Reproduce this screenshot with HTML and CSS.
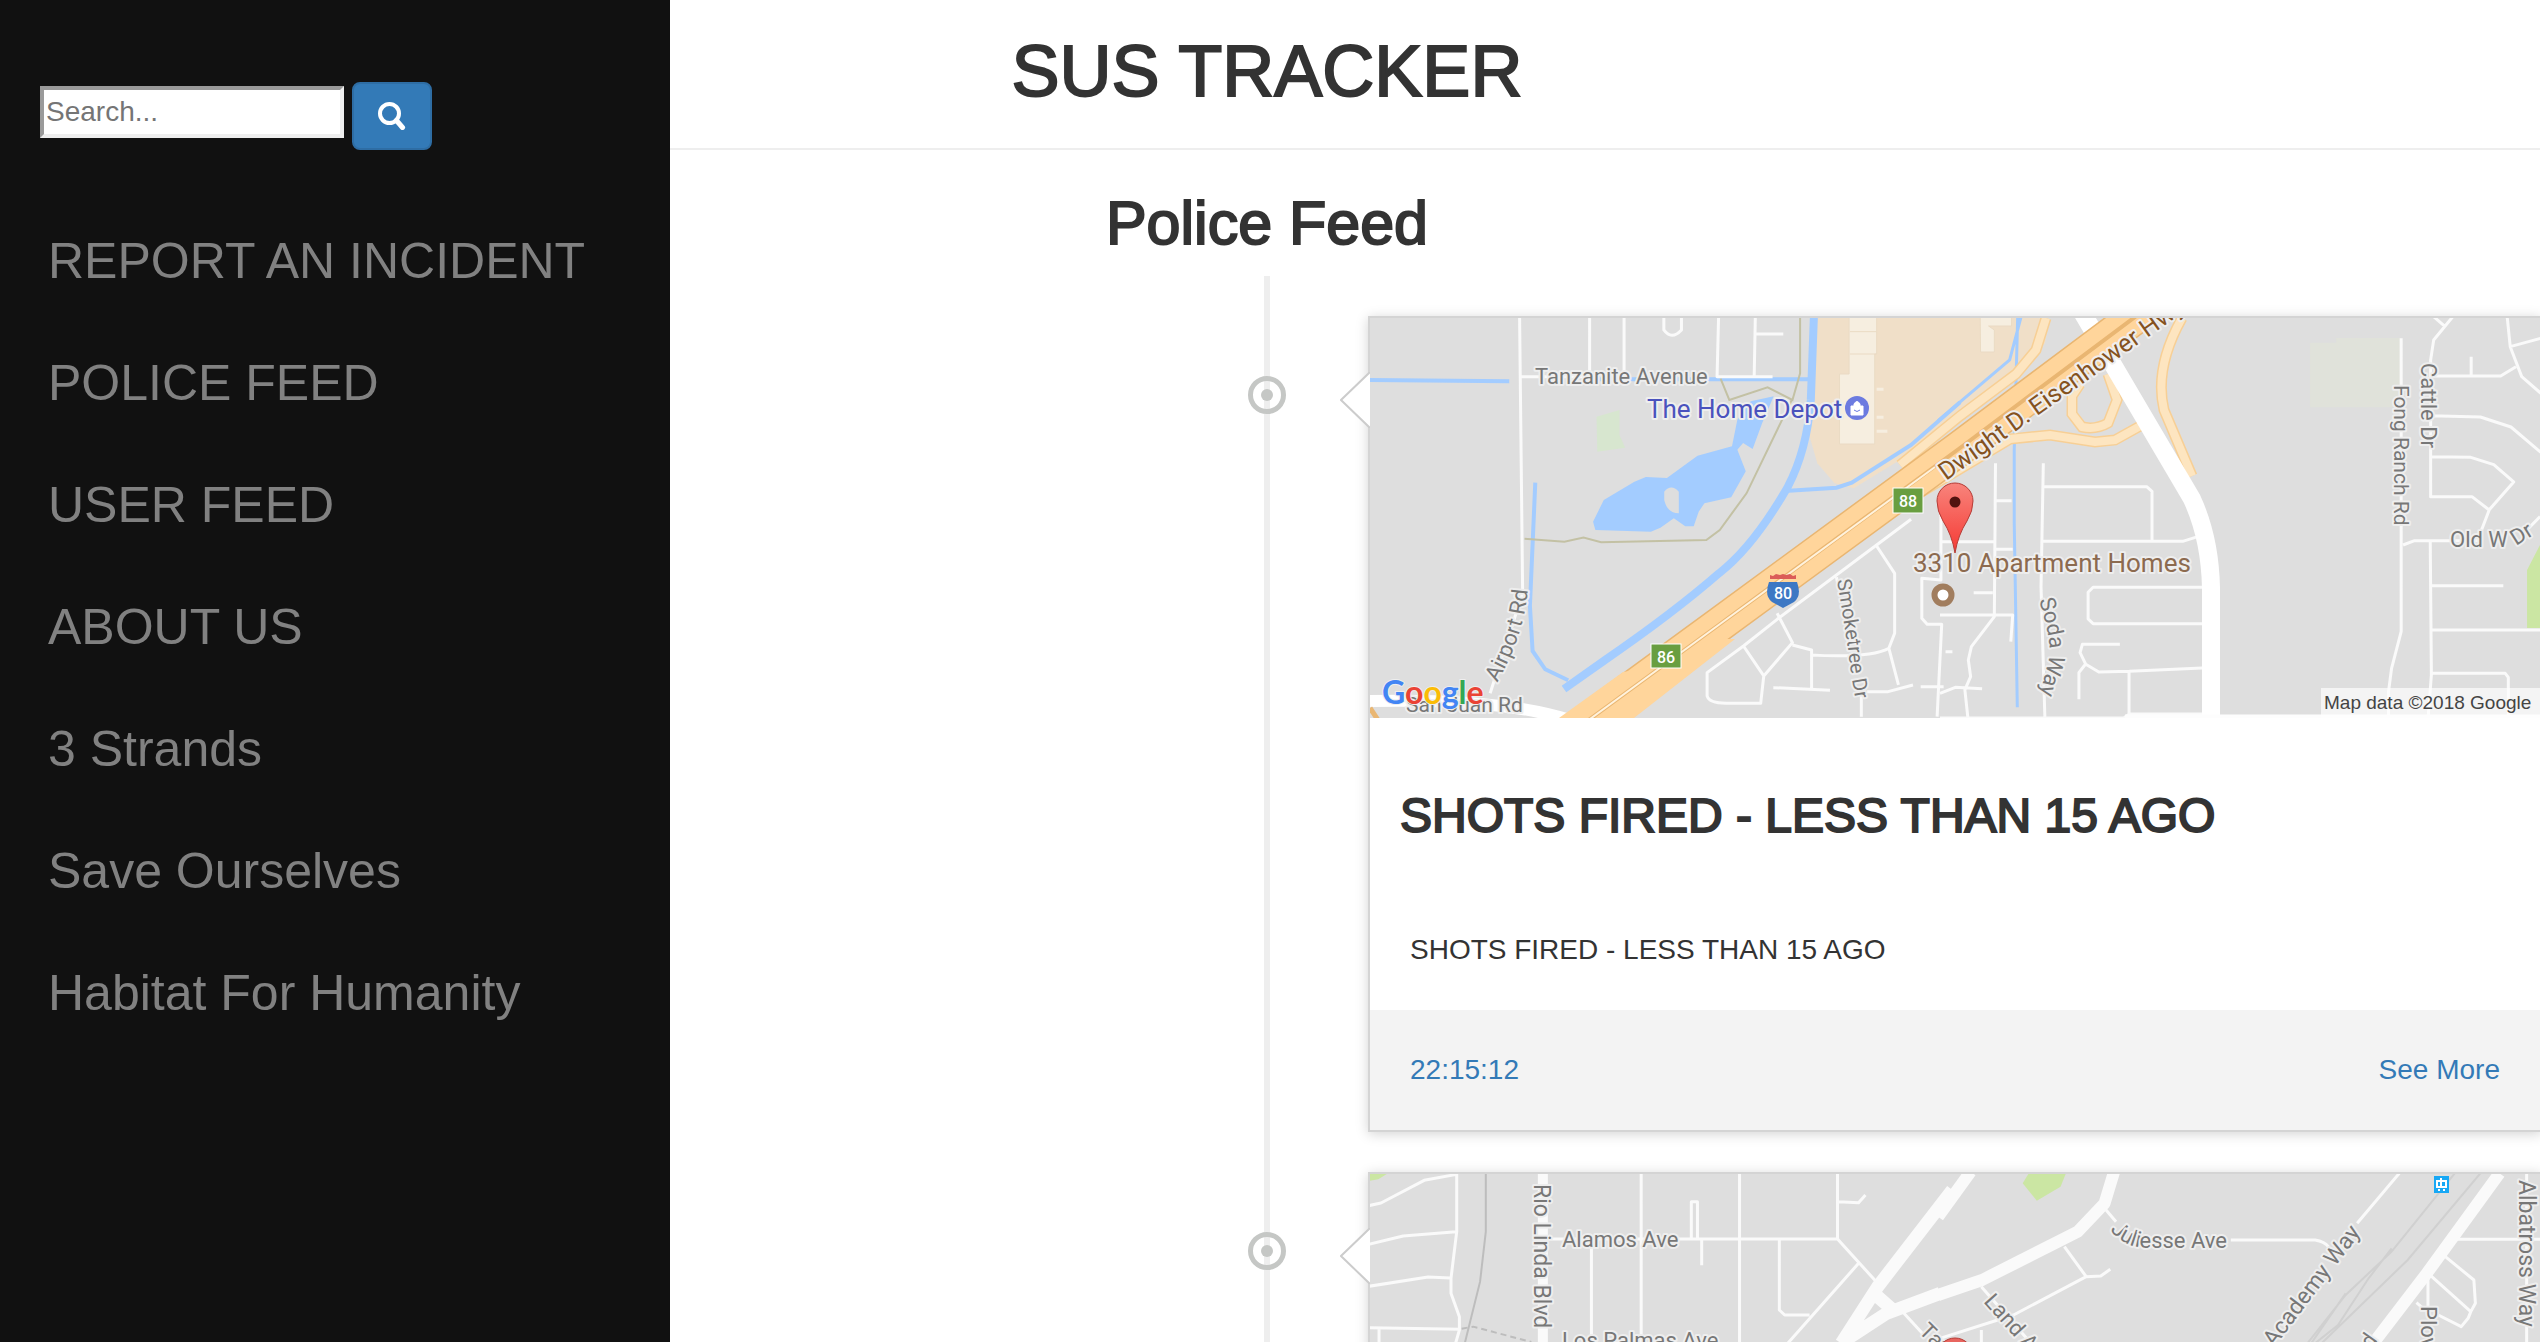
FILE: index.html
```html
<!DOCTYPE html>
<html lang="en">
<head>
<meta charset="utf-8">
<title>SUS Tracker</title>
<link rel="stylesheet" href="styles.css">
</head>
<body>
<div class="page">
  <aside class="sidebar">
    <form class="search">
      <input class="search-input" type="text" placeholder="Search..." aria-label="Search">
      <button class="search-button" type="button" aria-label="Search">
        <svg class="search-icon" viewBox="0 0 28 28" aria-hidden="true"><circle cx="11.500" cy="11.500" r="9.500" fill="none" stroke="#fff" stroke-width="4"/><path d="M18.500 18.500l6 7" stroke="#fff" stroke-width="5" stroke-linecap="round"/></svg>
      </button>
    </form>
    <nav class="menu">
      <a href="#report">REPORT AN INCIDENT</a>
      <a href="#police">POLICE FEED</a>
      <a href="#user">USER FEED</a>
      <a href="#about">ABOUT US</a>
      <a href="#strands">3 Strands</a>
      <a href="#save">Save Ourselves</a>
      <a href="#habitat">Habitat For Humanity</a>
    </nav>
  </aside>
  <main class="main">
    <h1 class="site-title">SUS TRACKER</h1>
    <hr class="rule">
    <h2 class="feed-title">Police Feed</h2>
    <ul class="timeline">
      <li class="entry">
        <svg class="badge" viewBox="0 0 38 38" aria-hidden="true"><circle cx="19" cy="19" r="16.500"/><circle class="dot" cx="19" cy="19" r="6"/></svg>
        <article class="card">
          <svg class="arrow" viewBox="0 0 30 56" aria-hidden="true"><path d="M30 0L1 28l29 28"/></svg>
          <svg class="map" viewBox="0 0 1170 400" role="img" aria-label="Map of the incident">
            <defs>
              <linearGradient id="pin" x1="0" y1="0" x2="0" y2="1"><stop offset="0" stop-color="#f8847c"/><stop offset="1" stop-color="#f53a34"/></linearGradient>
            </defs>
            <!-- land, parks and water -->
            <g class="shapes" transform="translate(-10 -18) scale(.3827 .3333)">
              <path fill="#f0dfc8" d="M1195 50H1800L1790 130 1568 340 1440 460 1290 565 1240 550 1195 490 1175 410z"/>
              <path fill="#f6eee0" stroke="#eadbc4" d="M1278 50h72v112h-5v270h-92V222h25z"/>
              <path stroke="#eadbc4" d="M1280 95h70M1280 162h70" fill="none"/>
              <path stroke="#f6eee0" stroke-width="3" d="M1350 268h18M1350 352h18M1350 394h28" fill="none"/>
              <path fill="#d7e6cf" d="M618 350l60-20v75l15 38-73 12z"/>
              <path fill="#a3ccff" d="M615 690l-6-25 28-65 80-55 30-14 55 3 80-67 90-28 14-80 35-55 60-15-30 80-25 78-25-18-15 20 22 65-38 78-70 18-15 25-13 44h-22l-30-24-35 28-25 12z"/>
              <path fill="#dedede" d="M795 575q18-25 38 0v65q-30 0-38-40z"/>
              <path fill="none" stroke="#a3ccff" stroke-width="4" d="M25 240l365 4M600 238h572M458 548l-14 370 7 135 33 55 60 33M1110 573l135-10 40-15 155-113 128-128"/>
              <path fill="none" stroke="#a3ccff" stroke-width="8" d="M1186 50l-8 250q-10 150-60 260-90 180-180 260-120 120-300 262l-105 85"/>
              <path fill="none" stroke="#c3c1a4" stroke-width="2" d="M1150 50v170l-20 80-65-38-100 38-23-65M1128 300l-118 280-70 110-35 30-275 7-46-14-50 12-104-9"/>
            </g>
            <g class="shapes" transform="translate(570 -18) scale(.3827 .3333)">
              <path fill="#f6eee0" stroke="#eadbc4" d="M105 50h82v28h-60l15 12v66h-36z"/>
              <path fill="#e0e2da" d="M967 128h68v-14h170v208H967z"/>
              <path fill="#cbe6a3" d="M1568 735l-34 75v174h34z"/>
              <path fill="none" stroke="#a3ccff" stroke-width="3" d="M212 50l-30 130L-5 362M203 50l-9 400v220l8 552"/>
            </g>
            <!-- side streets -->
            <g class="streets" transform="translate(-10 -18) scale(.3827 .3333)">
              <path d="M417 50l8 830-85 300M420 230h180M600 50v180M690 50v180M794 50v40q20 32 46 0V50M937 50l-4 180h145M1033 50l-3 180M1034 102h72M1440 658l-350 300-88 80-95 80v70q5 22 50 22h90l8-82 75-100-40-88M1002 1038l53 90M1350 738l47 82v180l-15 45q-50 30-205 20M1382 1045l25 110M1130 1035l50 15v118M1080 1163l148 8M1325 1175h55l65-20M1310 1175v75M1465 1160h60M1245 832l5 30M1518 640v200l-50-5v120l14 18h38l-12 277M1530 1055h18"/>
            </g>
            <g class="streets" transform="translate(570 -18) scale(.3827 .3333)">
              <path d="M145 490l-3 460-60 90-8 40 6 50-15 40 8 85M145 602h42M145 748h45M0 725h145M0 945h190l-5 80M88 878h50M0 1180l40-18 70 4M270 490l-6 370 10 390M270 560h270l14 14v145M264 724h370l50-18M685 862H400l-13 15v80l13 14h285M470 1033h-98l-6 25 15 35 34 23 80-2 190-10M494 1116v134M380 1093l-17 25v80M1205 115v880l-25 110-8 70v70M1340 50l-50 70-8 60v410h108l45 40-20 60M1290 50l30 30M1290 228h175l40-28M1388 170v55M1482 50l8 90 30 90 50 50M1490 140l80-25M1282 347l130 4 80 30 78 76M1282 470l105 2 60 22 52 52-65 85M1210 735l30-13h170M1568 650l-30 35M1281 725l3 400-8 120M1284 857h188M1284 990h285M1282 1120h195l8 12v115M0 1254h480l15-12h190"/>
            </g>
            <!-- ramps, arterials and the highway -->
            <g class="ramps">
              <path d="M548 176L640 121 680 117 725 124 745 122 772 107M676 0L666 32 646 56 590 98 530 147M738 56L747 82 738 105Q726 112 712 109L702 96V78L710 66M812 0Q784 50 794 92L822 158"/>
              <path class="fill" d="M548 176L640 121 680 117 725 124 745 122 772 107M676 0L666 32 646 56 590 98 530 147M738 56L747 82 738 105Q726 112 712 109L702 96V78L710 66M812 0Q784 50 794 92L822 158"/>
            </g>
            <g fill="none">
              <path stroke="#fff" stroke-width="12" d="M0 383Q130 380 200 402M-4 398h4"/>
              <path stroke="#fff" stroke-width="18" d="M712 -6L822 181Q840 220 841 270V402"/>
              <path stroke="#e9b672" stroke-width="36" d="M205 412L350 306 590 130 785 -16"/>
              <path stroke="#ffd59b" stroke-width="33" d="M205 412L350 306 590 130 785 -16"/>
              <path fill="#ffd59b" d="M189 400l64-46 18-3 70-30 24 0-101 79z"/>
              <path stroke="#e9b672" stroke-width="4" d="M205 412L350 306 590 130 785 -16"/>
              <path stroke="#fff2dc" stroke-width="2" d="M220 401L350 306 565 149"/>
              <path stroke="#e9b672" stroke-width="5" d="M0 390l8 12"/>
              <path stroke="#fdfdfd" stroke-width="7" d="M755 400h415"/>
            </g>
            <!-- labels -->
            <g class="labels">
              <text x="165" y="66" font-size="22">Tanzanite Avenue</text>
              <text x="277" y="100" font-size="26" fill="#4a52bd">The Home Depot</text>
              <text x="36" y="394" font-size="21">San Juan Rd</text>
              <path id="airport" fill="none" d="M127 365Q158 310 158 262"/>
              <text font-size="22"><textPath href="#airport">Airport Rd</textPath></text>
              <path id="smoke" fill="none" d="M467 262L478 330Q480 355 489 400"/>
              <text font-size="20"><textPath href="#smoke">Smoketree Dr</textPath></text>
              <path id="soda" fill="none" d="M669 282Q684 330 678 345L664 398"/>
              <text font-size="22"><textPath href="#soda">Soda Way</textPath></text>
              <path id="dwight" fill="none" d="M576 163L850 -32"/>
              <text font-size="25" fill="#85521e"><textPath href="#dwight">Dwight D. Eisenhower Hwy</textPath></text>
              <text font-size="21" transform="translate(1024 67) rotate(90)">Fong Ranch Rd</text>
              <text font-size="22" transform="translate(1051 45) rotate(90)">Cattle Dr</text>
              <text x="1080" y="229" font-size="22">Old W</text>
              <text font-size="22" transform="translate(1146 228) rotate(-32)">Dr</text>
            </g>
            <circle cx="487" cy="90" r="12" fill="#6c7be0"/>
            <path d="M481 88h12v9h-12zM484 88v-2q3-5 6 0v2" fill="#fff" stroke="#fff"/><path d="M484 92q3 3 6 0" fill="none" stroke="#6c7be0"/>
            <g class="signs">
              <rect x="523" y="170" width="30" height="25"/><text x="538" y="189">88</text>
              <rect x="281" y="326" width="30" height="24"/><text x="296" y="345">86</text>
              <path d="M399 264h28q5 14-3 20l-11 6-11-6q-8-6-3-20z" fill="#3d78c4" stroke="none"/>
              <path d="M400 261v-4l3 1 3-2 4 1 3-1 3 1 4-1 3 2 3-1v4z" fill="#db5c58" stroke="none"/>
              <text x="413" y="281">80</text>
            </g>
            <text class="place" x="543" y="254" font-size="26">3310 Apartment Homes</text>
            <path d="M585 235Q582 217 573 203Q567 193 567 183A18 18 0 0 1 603 183Q603 193 597 203Q588 217 585 235z" fill="url(#pin)" stroke="#b53d37" stroke-width="1"/>
            <circle cx="585" cy="184" r="5.500" fill="#52130f"/>
            <circle cx="573" cy="277" r="8.500" fill="#fff" stroke="#a17d5e" stroke-width="6"/>
            <text class="google" x="12" y="386"><tspan fill="#4285f4">G</tspan><tspan fill="#ea4335">o</tspan><tspan fill="#fbbc05">o</tspan><tspan fill="#4285f4">g</tspan><tspan fill="#34a853">l</tspan><tspan fill="#ea4335">e</tspan></text>
            <rect x="951" y="370" width="219" height="30" fill="#fff" opacity=".65"/>
            <text class="credit" x="954" y="391">Map data ©2018 Google</text>
          </svg>
          <h2 class="card-title">SHOTS FIRED - LESS THAN 15 AGO</h2>
          <p class="card-text">SHOTS FIRED - LESS THAN 15 AGO</p>
          <footer class="card-footer"><a href="#time">22:15:12</a><a href="#more">See More</a></footer>
        </article>
      </li>
      <li class="entry">
        <svg class="badge" viewBox="0 0 38 38" aria-hidden="true"><circle cx="19" cy="19" r="16.500"/><circle class="dot" cx="19" cy="19" r="6"/></svg>
        <article class="card">
          <svg class="arrow" viewBox="0 0 30 56" aria-hidden="true"><path d="M30 0L1 28l29 28"/></svg>
          <svg class="map" viewBox="0 0 1170 400" role="img" aria-label="Map of the incident">
            <g class="shapes" transform="translate(-30 -24) scale(.3827 .3333)">
              <path fill="#cbe6a3" d="M78 70h47l-25 18-22 4z"/>
              <path fill="none" stroke="#bdbdbd" stroke-width="2" d="M381 70v175l-15 150-40 185"/>
              <path fill="none" stroke="#bdbdbd" stroke-width="2" stroke-dasharray="6 4" d="M318 536l30-6 152 46"/>
            </g>
            <g class="shapes" transform="translate(570 -24) scale(.3827 .3333)">
              <path fill="#cbe6a3" d="M232 70h97l-14 40-62 42-37-52z"/>
              <path fill="none" stroke="#d0d0d0" stroke-width="2" d="M1345 70l-165 235-120 130-100 145M1412 70l-190 260-225 250M1180 295l-60 90-80 140-60 55M1060 430l-90 150"/>
            </g>
            <g class="streets" transform="translate(-30 -24) scale(.3827 .3333)">
              <path d="M75 167l32-8 113-68 85-18v172l-15 140v45l22 70v40l-10 40M75 283l90-25 138-13M75 409l155-28 58 3M75 533l240 5M102 535v45M550 267h750M787 70v510M657 270v310M1044 70v510M1300 70v197l105 133M1303 155l52 3 18-23M918 265V155h16v110M945 270v76M1148 270v210l14 15h65M1355 340l-185 240M1470 485l60 75"/>
              <path stroke-width="10" d="M530 70v510"/>
              <path stroke-width="13" d="M1600 120l-195 290-95 170M1568 430l-140 60-120 90M1400 435l40 40"/>
            </g>
            <g class="streets" transform="translate(570 -24) scale(.3827 .3333)">
              <path d="M430 175l30 40M760 270h220q25 5 35 20M325 290l57 90M445 358l-25 20-38 2-190 115L0 565M108 410l130 170M108 540v40M1200 70l-110 150M1340 268h230M1275 370v100M1280 375l107 110-7 20-18 25-60-35M1310 310l85 80 4 70-12 25M1245 458l15 15M1533 70v510"/>
              <path stroke-width="12" d="M455 65l-25 95-70 85-250 145-115 45M80 65L-5 200M1462 70l-190 300-140 210"/>
            </g>
            <g class="labels">
              <text font-size="23" transform="translate(164 10) rotate(90)">Rio Linda Blvd</text>
              <text x="192" y="73" font-size="22">Alamos Ave</text>
              <text x="192" y="174" font-size="22">Los Palmas Ave</text>
              <path id="jul" fill="none" d="M740 56Q754 73 775 74H900"/>
              <text font-size="22"><textPath href="#jul">Juliesse Ave</textPath></text>
              <text font-size="23" transform="translate(904 174) rotate(-53)">Academy Way</text>
              <text font-size="22" transform="translate(613 128) rotate(48)">Land Ave</text>
              <text font-size="22" transform="translate(548 158) rotate(45)">Taylor St</text>
              <text font-size="22" transform="translate(1001 176) rotate(-55)">d</text>
              <text font-size="22" transform="translate(1051 132) rotate(90)">Plover St</text>
              <text font-size="23" transform="translate(1149 6) rotate(90)">Albatross Way</text>
            </g>
            <rect x="1064" y="2" width="15" height="17" fill="#18a8f5"/><path d="M1067 7h9v6h-9zM1071 4v9M1068 16h2M1073 16h2" stroke="#fff" stroke-width="2" fill="none"/>
            <circle cx="585" cy="182" r="18" fill="#e8655f" stroke="#b53d37"/>
          </svg>
        </article>
      </li>
    </ul>
  </main>
</div>
</body>
</html>
```

FILE: styles.css
```css
* { box-sizing: border-box; }
html, body { height: 100%; }
body {
  margin: 0;
  overflow: hidden;
  background: #fff;
  color: #333;
  font: 28px/40px "Liberation Sans", Arial, sans-serif;
}
a { color: #337ab7; text-decoration: none; }

/* The sidebar lies in the first column, over the full-width content. */
.page {
  display: grid;
  grid-template-columns: 670px 1fr;
  grid-template-rows: 100vh;
}
.sidebar {
  grid-area: 1 / 1;
  z-index: 1;
  padding-top: 82px;
  background: #111;
}
.main {
  grid-area: 1 / 1 / 2 / 3;
  min-width: 0;
  margin-right: 6px;
}

.search { display: flex; gap: 8px; padding-left: 40px; }
.search-input {
  width: 304px;
  height: 52px;
  margin: 4px 0 0;
  padding: 0 2px;
  border: 4px solid;
  border-color: #9a9a9a #eee #eee #9a9a9a;
  background: #fff;
  font: inherit;
}
.search-input::placeholder { color: #757575; opacity: 1; }
.search-button {
  display: grid;
  place-items: center;
  width: 80px;
  height: 68px;
  padding: 0;
  border: 2px solid #2e6da4;
  border-radius: 8px;
  background: #337ab7;
}
.search-icon { width: 28px; height: 28px; }

.menu { display: flex; flex-direction: column; padding-top: 50px; }
.menu a {
  padding: 25px 48px;
  color: #818181;
  font-size: 50px;
  line-height: 72px;
}

/* Medium weight: the regular face with a thin outline. */
.site-title, .feed-title, .card-title {
  font-weight: 400;
  -webkit-text-stroke: 2px #333;
}
.site-title {
  margin: 0;
  padding: 31px 0 37px;
  font-size: 72px;
  line-height: 80px;
  text-align: center;
}
.rule { height: 2px; margin: 0 -6px 0 0; border: 0; background: #eee; }
.feed-title {
  margin: 40px 0 20px;
  font-size: 61px;
  line-height: 66px;
  text-align: center;
}

.timeline {
  display: flex;
  flex-direction: column;
  gap: 40px;
  margin: 0;
  padding: 40px 0;
  list-style: none;
  background: linear-gradient(#eee, #eee) center / 6px 100% no-repeat;
}
.entry {
  display: grid;
  grid-template-columns: 1fr 38px 1fr;
  align-items: start;
}
.badge {
  grid-column: 2;
  width: 38px;
  height: 38px;
  margin-top: 60px;
  fill: none;
  stroke: #c5c7c5;
  stroke-width: 5;
}
.badge .dot { fill: #c5c7c5; stroke: none; }
.card {
  position: relative;
  grid-column: 3;
  margin: 0 -8px 0 82px;
  border: 2px solid #d4d4d4;
  background: #fff;
  box-shadow: 0 2px 12px rgba(0, 0, 0, .175);
}
.arrow {
  position: absolute;
  top: 54px;
  left: -30px;
  width: 30px;
  height: 56px;
  fill: #fff;
  stroke: #ccc;
  stroke-width: 2;
}
.card-title {
  margin: 72px 30px 88px;
  font-size: 48px;
  line-height: 52px;
}
.card-text { margin: 0 40px 40px; }
.card-footer {
  display: flex;
  justify-content: space-between;
  padding: 40px;
  background: #f3f3f3;
}

.map {
  display: block;
  width: 100%;
  background: #dedede;
  font-family: Roboto, sans-serif;
}
.shapes path, .streets path { vector-effect: non-scaling-stroke; }
.streets {
  fill: none;
  stroke: #fafafa;
  stroke-width: 3;
  stroke-linejoin: round;
}
.ramps { fill: none; stroke: #f7cf95; stroke-width: 11; }
.ramps .fill { stroke: #fde5c0; stroke-width: 8; }
.labels text, .place {
  paint-order: stroke;
  stroke: #eee;
  stroke-width: 4px;
  stroke-linejoin: round;
}
.labels { fill: #777; }
.place { fill: #8c6a4f; }
.signs { fill: #699e40; stroke: #fff; }
.signs text {
  fill: #fff;
  stroke: none;
  font-size: 16px;
  font-weight: 500;
  text-anchor: middle;
}
.google {
  font-family: Lato, sans-serif;
  font-size: 32px;
  font-weight: 700;
  paint-order: stroke;
  stroke: #eee;
  stroke-width: 2px;
}
.credit { fill: #444; font-family: "Liberation Sans", Arial, sans-serif; font-size: 19px; }
```
